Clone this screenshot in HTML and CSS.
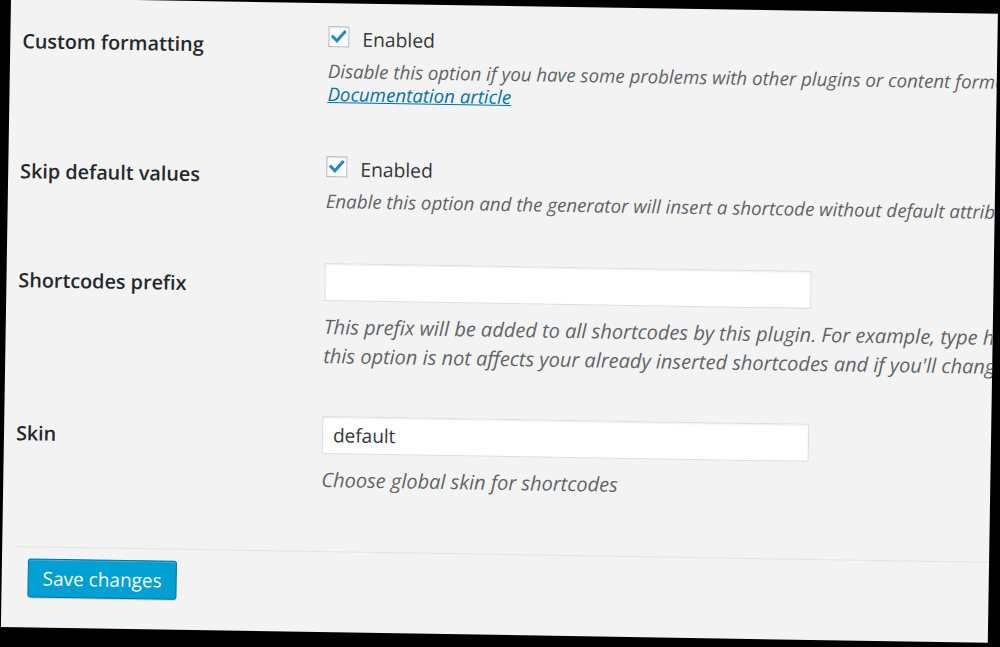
FILE: index.html
```html
<!DOCTYPE html>
<html lang="en">
<head>
<meta charset="utf-8">
<title>Settings</title>
<link rel="stylesheet" href="styles.css">
</head>
<body>
<div class="panel">
  <div class="row row-a">
    <div class="th">Custom formatting</div>
    <div class="td">
      <label class="check"><span class="box"><svg viewBox="0 0 21 21" width="21" height="21"><path d="M4.5 10.5 L8.6 14.6 L16.2 5.8" fill="none" stroke="#1e8cbe" stroke-width="3" stroke-linecap="square" stroke-linejoin="miter"/></svg></span>Enabled</label>
      <p class="desc">Disable this option if you have some problems with other plugins or content formatting<br><a class="doc" href="#">Documentation article</a></p>
    </div>
  </div>
  <div class="row row-b">
    <div class="th">Skip default values</div>
    <div class="td">
      <label class="check"><span class="box"><svg viewBox="0 0 21 21" width="21" height="21"><path d="M4.5 10.5 L8.6 14.6 L16.2 5.8" fill="none" stroke="#1e8cbe" stroke-width="3" stroke-linecap="square" stroke-linejoin="miter"/></svg></span>Enabled</label>
      <p class="desc">Enable this option and the generator will insert a shortcode without default attributes</p>
    </div>
  </div>
  <div class="row row-c">
    <div class="th">Shortcodes prefix</div>
    <div class="td">
      <div class="field"></div>
      <p class="desc desc-tall">This prefix will be added to all shortcodes by this plugin. For example, type here su_<br>this option is not affects your already inserted shortcodes and if you'll change</p>
    </div>
  </div>
  <div class="row row-d">
    <div class="th">Skin</div>
    <div class="td">
      <div class="field">default</div>
      <p class="desc desc-tall desc-skin">Choose global skin for shortcodes</p>
    </div>
  </div>
  <div class="submit">
    <button class="btn" type="button">Save changes</button>
  </div>
</div>
</body>
</html>
```
FILE: styles.css
```css
html, body {
  margin: 0;
  padding: 0;
  background: #000;
  overflow: hidden;
  width: 1000px;
  height: 647px;
}

.panel {
  width: 987px;
  height: 629px;
  margin: -2px 0 0 11px;
  background: #f3f3f3;
  transform: rotate(0.92deg);
  transform-origin: 0 0;
  overflow: hidden;
  font-family: "Open Sans", "Noto Sans", sans-serif;
  color: #23282d;
}

.row {
  display: grid;
  grid-template-columns: 306px 1fr;
  padding-left: 12px;
}

.th {
  padding-top: 30px;
  font-size: 19.8px;
  line-height: 26px;
  font-weight: 600;
  color: #23282d;
}

.td {
  padding: 23px 0 30px;
  min-width: 0;
}

.row-a .td {
  padding-bottom: 28px;
}

.row-c .td {
  padding-bottom: 25px;
}

.row-d .td {
  padding-bottom: 0;
}

.check {
  display: flex;
  align-items: flex-start;
  height: 26px;
  font-size: 19.3px;
  line-height: 26px;
  color: #32373c;
}

.box {
  display: block;
  width: 21px;
  height: 21px;
  box-sizing: border-box;
  margin-right: 13px;
  background: #fff;
  border: 1px solid #b4b9be;
  box-shadow: inset 0 1px 2px rgba(0, 0, 0, 0.1);
  position: relative;
}

.box svg {
  display: block;
  position: absolute;
  left: -1px;
  top: -1px;
}

.desc {
  margin: 7px 0 0;
  font-size: 18.7px;
  line-height: 23px;
  font-style: italic;
  color: #5f6368;
  white-space: nowrap;
}

.desc-tall {
  margin-top: 11px;
  font-size: 20px;
  line-height: 29px;
}

.desc-skin {
  margin-top: 11px;
}

.doc {
  color: #0073aa;
  text-decoration: underline;
}

.field {
  width: 487px;
  height: 38px;
  box-sizing: border-box;
  margin-top: -2px;
  padding: 0 10px;
  background: #fff;
  border: 1px solid #ddd;
  box-shadow: inset 0 1px 2px rgba(0, 0, 0, 0.07);
  font-size: 19px;
  line-height: 36px;
  color: #32373c;
}

.submit {
  margin: 57px 0 0 12px;
  padding: 11px 0 0 14px;
  border-top: 1px solid #e4e4e4;
}

.btn {
  display: block;
  width: 149px;
  height: 39px;
  margin: 0;
  padding: 0;
  box-sizing: border-box;
  background: #00a0d2;
  border: 1px solid #0073aa;
  border-radius: 3px;
  box-shadow: inset 0 1px 0 rgba(120, 200, 230, 0.5), 0 1px 0 rgba(0, 0, 0, 0.15);
  font-family: "Open Sans", "Noto Sans", sans-serif;
  font-size: 19px;
  line-height: 36px;
  color: #fff;
  text-align: center;
}
```
